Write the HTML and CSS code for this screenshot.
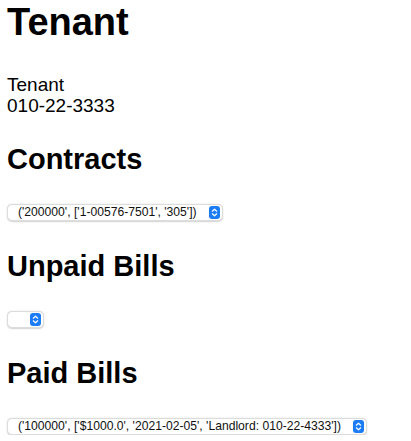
FILE: index.html
```html
<!DOCTYPE html>
<html lang="en">
<head>
<meta charset="utf-8">
<title>Tenant</title>
<link rel="stylesheet" href="styles.css">
</head>
<body>
<h1 class="title">Tenant</h1>
<p class="info">Tenant<br>010-22-3333</p>

<h2 class="section section-first">Contracts</h2>
<div class="picker">
  <select class="picker-select"><option>('200000', ['1-00576-7501', '305'])</option></select>
  <span class="picker-btn"><svg width="11" height="13" viewBox="0 0 11 13"><rect width="11" height="13" rx="3" fill="#1b7cf6"/><path d="M3.3 5.2 L5.5 3.2 L7.7 5.2 M3.3 7.8 L5.5 9.8 L7.7 7.8" fill="none" stroke="#fff" stroke-width="1.2" stroke-linecap="round" stroke-linejoin="round"/></svg></span>
</div>

<h2 class="section">Unpaid Bills</h2>
<div class="picker">
  <select class="picker-select"><option></option></select>
  <span class="picker-btn"><svg width="11" height="13" viewBox="0 0 11 13"><rect width="11" height="13" rx="3" fill="#1b7cf6"/><path d="M3.3 5.2 L5.5 3.2 L7.7 5.2 M3.3 7.8 L5.5 9.8 L7.7 7.8" fill="none" stroke="#fff" stroke-width="1.2" stroke-linecap="round" stroke-linejoin="round"/></svg></span>
</div>

<h2 class="section">Paid Bills</h2>
<div class="picker">
  <select class="picker-select"><option>('100000', ['$1000.0', '2021-02-05', 'Landlord: 010-22-4333'])</option></select>
  <span class="picker-btn"><svg width="11" height="13" viewBox="0 0 11 13"><rect width="11" height="13" rx="3" fill="#1b7cf6"/><path d="M3.3 5.2 L5.5 3.2 L7.7 5.2 M3.3 7.8 L5.5 9.8 L7.7 7.8" fill="none" stroke="#fff" stroke-width="1.2" stroke-linecap="round" stroke-linejoin="round"/></svg></span>
</div>
</body>
</html>
```

FILE: styles.css
```css
html, body {
  background: #fff;
}
body {
  margin: 0;
  padding: 0 7px;
  font-family: "Liberation Sans", Arial, Helvetica, sans-serif;
  color: #000;
}
.title {
  margin: 0;
  font-size: 38px;
  line-height: 44px;
  font-weight: bold;
}
.info {
  margin: 30px 0 0;
  font-size: 19px;
  line-height: 21px;
}
.section {
  margin: 28px 0 28px;
  font-size: 29px;
  line-height: 34px;
  font-weight: bold;
}
.section-first {
  margin-top: 26px;
}
.picker {
  position: relative;
  display: flex;
  width: fit-content;
}
.picker-select {
  appearance: none;
  -webkit-appearance: none;
  box-sizing: border-box;
  height: 17px;
  margin: 0;
  padding: 0 25px 0 10px;
  border: 1px solid #dcdcdc;
  border-radius: 5px;
  background: #fff;
  box-shadow: 0 0.5px 1.5px rgba(0, 0, 0, 0.18);
  font-family: "Liberation Sans", Arial, Helvetica, sans-serif;
  font-size: 12.15px;
  line-height: 15px;
  color: #111;
}
.picker-btn {
  position: absolute;
  right: 3px;
  top: 2px;
  display: flex;
  pointer-events: none;
}
```
